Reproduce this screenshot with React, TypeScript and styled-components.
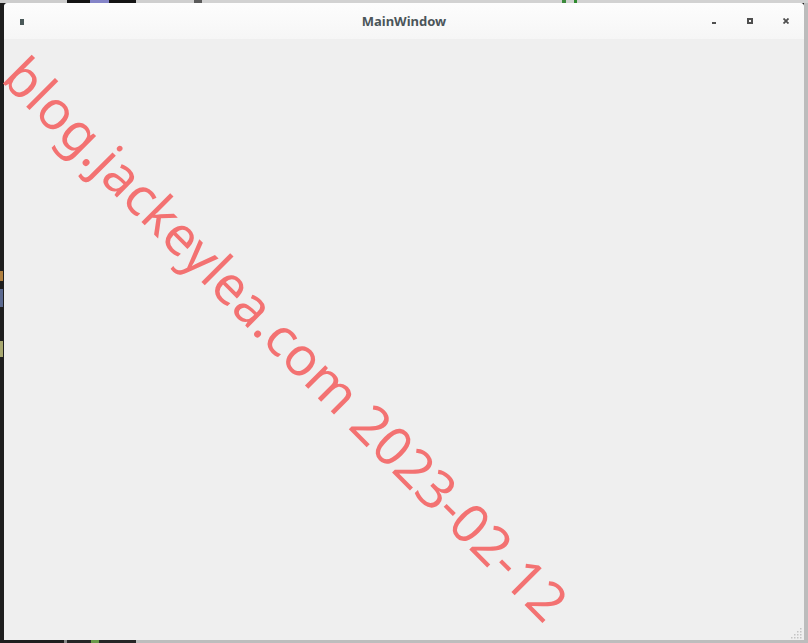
import React from 'react'
import styled, { createGlobalStyle } from 'styled-components'

const GlobalStyle = createGlobalStyle`
  html, body {
    margin: 0;
    padding: 0;
    background: #1e1e1e;
    overflow: hidden;
  }
`

const Screen = styled.div`
  position: relative;
  width: 808px;
  height: 643px;
  display: flex;
  flex-direction: column;
  background: #1e1e1e;
  overflow: hidden;
  font-family: 'Noto Sans', 'Open Sans', sans-serif;
`

const Strip = styled.div`
  height: 3px;
  display: flex;
  flex-shrink: 0;
`

const Segment = styled.div<{ $w?: number; $color: string }>`
  width: ${(p) => (p.$w ? `${p.$w}px` : 'auto')};
  flex: ${(p) => (p.$w ? '0 0 auto' : '1')};
  background: ${(p) => p.$color};
`

const Middle = styled.div`
  flex: 1;
  display: flex;
  min-height: 0;
`

const SideEdge = styled.div<{ $color: string }>`
  width: 4px;
  flex-shrink: 0;
  display: flex;
  flex-direction: column;
  background: ${(p) => p.$color};
`

const EdgeMark = styled.div<{ $h: number; $color: string; $gap: number }>`
  height: ${(p) => p.$h}px;
  width: 3px;
  margin-top: ${(p) => p.$gap}px;
  background: ${(p) => p.$color};
`

const Window = styled.div`
  flex: 1;
  display: flex;
  flex-direction: column;
  border-radius: 4px 4px 0 0;
  overflow: hidden;
  background: #efefef;
`

const TitleBar = styled.div`
  height: 36px;
  flex-shrink: 0;
  display: grid;
  grid-template-columns: 1fr auto 1fr;
  align-items: center;
  background: linear-gradient(#fdfdfd, #f6f6f6);
`

const AppIcon = styled.div`
  width: 4px;
  height: 6px;
  margin-left: 16px;
  margin-top: 1px;
  background: #4a5858;
`

const Title = styled.div`
  font-size: 13px;
  font-weight: 700;
  color: #4b5559;
  line-height: 36px;
`

const Controls = styled.div`
  display: flex;
  justify-self: end;
`

const ControlButton = styled.div`
  width: 36px;
  height: 36px;
  display: flex;
  align-items: center;
  justify-content: center;
`

const Body = styled.div`
  flex: 1;
  position: relative;
  background: #efefef;
`

const Grip = styled.svg`
  position: absolute;
  right: 1px;
  bottom: 0;
`

const Watermark = styled.div`
  position: absolute;
  left: 33px;
  top: 47px;
  transform: rotate(45deg);
  transform-origin: 0 0;
  font-family: 'Noto Sans', 'Open Sans', sans-serif;
  font-size: 53.5px;
  line-height: 1;
  white-space: nowrap;
  color: #f37272;
  pointer-events: none;
`

function MinimizeIcon() {
  return (
    <svg width='6' height='6' viewBox='0 0 6 6'>
      <rect x='1' y='4' width='4' height='2' fill='#4f4f4f' />
    </svg>
  )
}

function MaximizeIcon() {
  return (
    <svg width='6' height='6' viewBox='0 0 6 6'>
      <path d='M0 0h6v6H0z M2 2v2h2V2z' fill='#4f4f4f' fillRule='evenodd' />
    </svg>
  )
}

function CloseIcon() {
  return (
    <svg width='6' height='6' viewBox='0 0 6 6'>
      <path d='M0.5 0.5L5.5 5.5M5.5 0.5L0.5 5.5' stroke='#4f4f4f' strokeWidth='1.8' />
    </svg>
  )
}

function ResizeGrip() {
  const dots: [number, number][] = []
  for (let r = 0; r < 4; r++) {
    for (let c = 3 - r; c < 4; c++) dots.push([c * 3, r * 3])
  }
  return (
    <Grip width='12' height='12' viewBox='0 0 12 12'>
      {dots.map(([x, y]) => (
        <rect key={`${x}-${y}`} x={x} y={y} width='1.5' height='1.5' fill='#c4c4c4' />
      ))}
    </Grip>
  )
}

export default function App() {
  return (
    <>
      <GlobalStyle />
      <Screen>
        <Strip>
          <Segment $w={67} $color='#cdcdcd' />
          <Segment $w={23} $color='#151515' />
          <Segment $w={19} $color='#8585c8' />
          <Segment $w={27} $color='#151515' />
          <Segment $w={58} $color='#cfcfcf' />
          <Segment $w={8} $color='#5a5a5a' />
          <Segment $w={360} $color='#d2d2d2' />
          <Segment $w={4} $color='#3c8a3c' />
          <Segment $w={8} $color='#d2d2d2' />
          <Segment $w={3} $color='#2f8a2f' />
          <Segment $color='#d2d2d2' />
        </Strip>
        <Middle>
          <SideEdge $color='#1e1e1e'>
            <EdgeMark $gap={268} $h={10} $color='#b08040' />
            <EdgeMark $gap={8} $h={18} $color='#5c6a90' />
            <EdgeMark $gap={34} $h={16} $color='#a8a870' />
          </SideEdge>
          <Window>
            <TitleBar>
              <AppIcon />
              <Title>MainWindow</Title>
              <Controls>
                <ControlButton>
                  <MinimizeIcon />
                </ControlButton>
                <ControlButton>
                  <MaximizeIcon />
                </ControlButton>
                <ControlButton>
                  <CloseIcon />
                </ControlButton>
              </Controls>
            </TitleBar>
            <Body>
              <ResizeGrip />
            </Body>
          </Window>
          <SideEdge $color='#bcbcbc' />
        </Middle>
        <Strip>
          <Segment $w={64} $color='#1e1e1e' />
          <Segment $w={3} $color='#8a8a8a' />
          <Segment $w={24} $color='#262626' />
          <Segment $w={8} $color='#6a9a4a' />
          <Segment $w={37} $color='#262626' />
          <Segment $color='#bdbdbd' />
        </Strip>
        <Watermark>blog.jackeylea.com 2023-02-12</Watermark>
      </Screen>
    </>
  )
}
